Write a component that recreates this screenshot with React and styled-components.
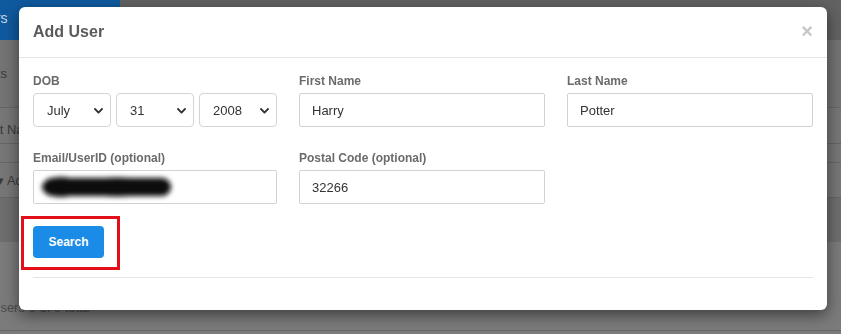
import React from 'react';
import styled, { createGlobalStyle } from 'styled-components';

const Global = createGlobalStyle`
  html, body { margin: 0; padding: 0; }
  body {
    font-family: "Liberation Sans", Arial, Helvetica, sans-serif;
    background: #7b7b7b;
    overflow: hidden;
  }
  * { box-sizing: border-box; }
`;

/* ---------- dimmed page behind the modal ---------- */
const Page = styled.div`
  width: 841px;
  height: 334px;
  overflow: hidden;
  display: flex;
  flex-direction: column;
  background: #7b7b7b;
  color: #3a3a3a;
  font-size: 13px;
`;

const TopNav = styled.div`
  height: 40px;
  flex-shrink: 0;
  display: flex;
  background: #626262;
`;

const NavTab = styled.div`
  width: 120px;
  background: #0f5a9f;
  color: #c9d5e3;
  font-size: 14px;
  line-height: 36px;
  white-space: nowrap;
  overflow: hidden;
  text-indent: -29px;
`;

const Band = styled.div`
  height: ${p => p.$h}px;
  flex-shrink: 0;
  display: flex;
  align-items: center;
  padding-top: ${p => p.$pt || 0}px;
  background: ${p => p.$bg || 'transparent'};
  border-bottom: ${p => (p.$line ? '1px solid #666' : 'none')};
  white-space: nowrap;
  overflow: hidden;
`;

const Clipped = styled.span`
  display: block;
  text-indent: ${p => p.$indent}px;
  color: ${p => p.$color || '#3a3a3a'};
`;

const Grow = styled.div`
  flex: 1;
`;

/* ---------- modal ---------- */
const Overlay = styled.div`
  position: fixed;
  inset: 0;
  display: flex;
  align-items: flex-start;
  justify-content: flex-start;
  padding: 7px 0 0 19px;
`;

const Modal = styled.div`
  width: 808px;
  background: #fff;
  border-radius: 6px;
  box-shadow: 0 5px 15px rgba(0, 0, 0, 0.5);
  display: flex;
  flex-direction: column;
`;

const Header = styled.div`
  height: 51px;
  border-bottom: 1px solid #e5e5e5;
  display: flex;
  align-items: center;
  justify-content: space-between;
  padding: 0 14px;
`;

const Title = styled.h4`
  margin: 0;
  font-size: 16px;
  font-weight: 700;
  color: #5a5a5a;
`;

const Close = styled.span`
  font-size: 20px;
  font-weight: 700;
  line-height: 1;
  color: #c6c6c6;
  margin-top: -3px;
`;

const Body = styled.div`
  padding: 14px 14px 0 14px;
  display: flex;
  flex-direction: column;
`;

const FormGrid = styled.div`
  display: grid;
  grid-template-columns: 244px 246px 246px;
  column-gap: 22px;
  row-gap: 22px;
`;

const Field = styled.div`
  display: flex;
  flex-direction: column;
`;

const Label = styled.label`
  font-size: 12px;
  font-weight: 700;
  line-height: 18px;
  color: #6b6b6b;
  margin-bottom: 3px;
`;

const SelectRow = styled.div`
  display: flex;
  gap: 5px;
`;

const SelectWrap = styled.div`
  position: relative;
  flex: 1;
`;

const Select = styled.select`
  appearance: none;
  -webkit-appearance: none;
  width: 100%;
  height: 34px;
  border: 1px solid #d4d4d4;
  border-radius: 4px;
  background: #fff;
  padding: 0 0 0 13px;
  font-family: inherit;
  font-size: 13px;
  color: #333;
  outline: none;
`;

const Chevron = styled.svg`
  position: absolute;
  right: 8px;
  top: 15px;
  pointer-events: none;
`;

const InputWrap = styled.div`
  position: relative;
`;

const Input = styled.input`
  width: 100%;
  height: 34px;
  border: 1px solid #d2d2d2;
  border-radius: 2px;
  padding: 0 12px;
  font-family: inherit;
  font-size: 13px;
  color: #333;
  outline: none;
`;

const Redaction = styled.svg`
  position: absolute;
  left: 2px;
  top: 1px;
  pointer-events: none;
`;

const Highlight = styled.div`
  align-self: flex-start;
  margin: 12px 0 0 -12px;
  border: 3px solid #e3101a;
  padding: 7px 13px 9px 9px;
`;

const Button = styled.button`
  display: block;
  width: 71px;
  height: 32px;
  border: none;
  border-radius: 4px;
  background: #1a8be6;
  color: #fff;
  font-family: inherit;
  font-size: 12px;
  font-weight: 700;
  padding: 0;
`;

const Footer = styled.div`
  margin: 7px 14px 0 14px;
  border-top: 1px solid #e5e5e5;
  height: 33px;
`;

const ChevronIcon = () => (
  <Chevron width="9" height="6" viewBox="0 0 9 6">
    <polyline points="1,1 4.5,4.6 8,1" fill="none" stroke="#333" strokeWidth="1.8" strokeLinecap="round" strokeLinejoin="round" />
  </Chevron>
);

const DateSelect = ({ options, value }) => (
  <SelectWrap>
    <Select defaultValue={value}>
      {options.map(o => (
        <option key={o} value={o}>{o}</option>
      ))}
    </Select>
    <ChevronIcon />
  </SelectWrap>
);

const months = ['January','February','March','April','May','June','July','August','September','October','November','December'];
const days = Array.from({ length: 31 }, (_, i) => String(i + 1));
const years = Array.from({ length: 30 }, (_, i) => String(1995 + i));

export default function App() {
  return (
    <>
      <Global />
      <Page>
        <TopNav>
          <NavTab>Users</NavTab>
        </TopNav>
        <Band $h={68} $bg="#747474" $line>
          <Clipped $indent={-40}>Patients</Clipped>
        </Band>
        <Band $h={36} $pt={8} $bg="#777" $line>
          <Clipped $indent={-22}>First Name</Clipped>
        </Band>
        <Band $h={19} $bg="#777" $line />
        <Band $h={35} $bg="#777" $line>
          <Clipped $indent={-3}>▾ Add User</Clipped>
        </Band>
        <Band $h={44} $bg="#6e6e6e" />
        <Grow />
        <Band $h={22}>
          <Clipped $indent={-9} $color="#4c4c4c">Users 0 of 0 total</Clipped>
        </Band>
        <Band $h={13} $line />
        <Band $h={3} />
      </Page>

      <Overlay>
        <Modal>
          <Header>
            <Title>Add User</Title>
            <Close>×</Close>
          </Header>
          <Body>
            <FormGrid>
              <Field>
                <Label>DOB</Label>
                <SelectRow>
                  <DateSelect options={months} value="July" />
                  <DateSelect options={days} value="31" />
                  <DateSelect options={years} value="2008" />
                </SelectRow>
              </Field>
              <Field>
                <Label>First Name</Label>
                <Input defaultValue="Harry" />
              </Field>
              <Field>
                <Label>Last Name</Label>
                <Input defaultValue="Potter" />
              </Field>
              <Field>
                <Label>Email/UserID (optional)</Label>
                <InputWrap>
                  <Input defaultValue="" />
                  <Redaction width="144" height="32" viewBox="0 0 144 32">
                    <defs>
                      <filter id="blurry" x="-20%" y="-50%" width="140%" height="200%">
                        <feGaussianBlur stdDeviation="2.6" />
                      </filter>
                    </defs>
                    <g filter="url(#blurry)" fill="#080808">
                      <rect x="8" y="7" width="128" height="18" rx="9" />
                      <ellipse cx="26" cy="16" rx="19" ry="10" />
                      <ellipse cx="82" cy="16" rx="42" ry="9.5" />
                    </g>
                  </Redaction>
                </InputWrap>
              </Field>
              <Field>
                <Label>Postal Code (optional)</Label>
                <Input defaultValue="32266" />
              </Field>
            </FormGrid>
            <Highlight>
              <Button>Search</Button>
            </Highlight>
          </Body>
          <Footer />
        </Modal>
      </Overlay>
    </>
  );
}
